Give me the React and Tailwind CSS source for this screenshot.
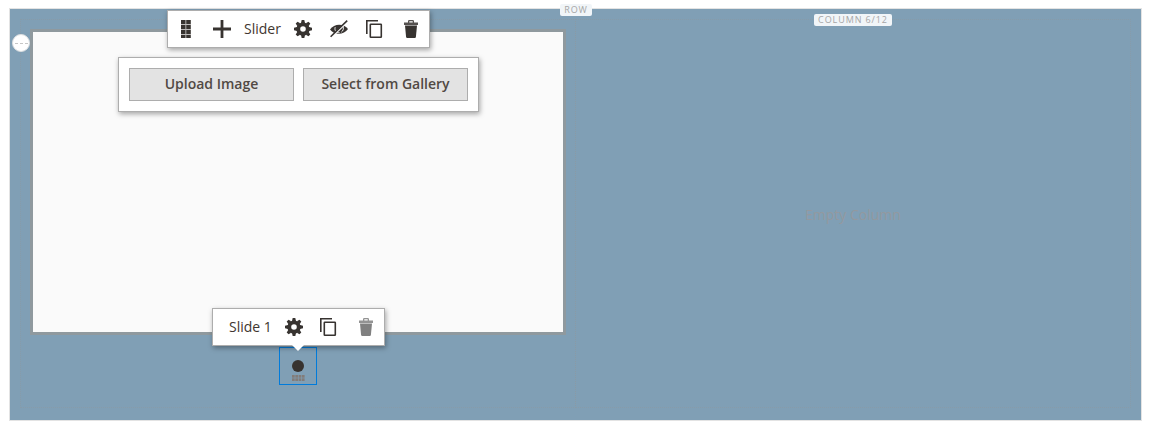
import React from "react";

const Grip = () => (
  <svg width="10" height="18" viewBox="0 0 10 18">
    <rect width="10" height="18" fill="#bdbbba" />
    {[0, 5, 10, 15].map((y) => (
      <g key={y} fill="#373330">
        <rect x="0" y={y} width="4.4" height={y === 15 ? 3 : 4} />
        <rect x="5.3" y={y} width="4.4" height={y === 15 ? 3 : 4} />
      </g>
    ))}
  </svg>
);

const Plus = () => (
  <svg width="18" height="18" viewBox="0 0 18 18" fill="#373330">
    <path d="M7.6 0h2.8v7.6H18v2.8h-7.6V18H7.6v-7.6H0V7.6h7.6z" />
  </svg>
);

const Gear = () => (
  <svg width="18" height="18" viewBox="-9 -9 18 18" fill="#373330">
    {[0, 45, 90, 135, 180, 225, 270, 315].map((a) => (
      <path key={a} d="M-2 -6L-1.3 -9H1.3L2 -6z" transform={`rotate(${a})`} />
    ))}
    <circle r="4.7" fill="none" stroke="#373330" strokeWidth="3.8" />
  </svg>
);

const EyeOff = () => (
  <svg width="20" height="18" viewBox="0 0 20 18">
    <path d="M1 9.5C5 3.2 15 3.2 19 9C15 15.3 5 15.3 1 9.5z" fill="#373330" />
    <path d="M6.2 7.2C5.2 10.5 7.5 13 10.5 12.6" fill="none" stroke="#fff" strokeWidth=".9" />
    <path d="M14 6.3C15 8.5 14 11 12.3 12.2" fill="none" stroke="#fff" strokeWidth=".9" />
    <path d="M2.2 17.6L18.8 1.4" stroke="#fff" strokeWidth="1.6" />
    <path d="M1.6 16.8L18.2 .6" stroke="#373330" strokeWidth="1.6" />
  </svg>
);

const Copy = () => (
  <svg width="17" height="19" viewBox="0 0 17 19" fill="none" stroke="#373330" strokeWidth="1.6">
    <path d="M.8 14V.8H12" />
    <rect x="4.3" y="4.3" width="11" height="13" rx=".5" />
  </svg>
);

const Trash = ({ color }) => (
  <svg width="14" height="18" viewBox="0 0 14 18" fill={color}>
    <path d="M0 2.6h4V1.2Q4 0 5.2 0h3.6Q10 0 10 1.2v1.4h4v2.3H0zM5.3 1.3v1.3h3.4V1.3z" fillRule="evenodd" opacity=".85" />
    <path d="M1 5.6h12l-1.1 11.4Q11.8 18 10.8 18H3.2Q2.2 18 2.1 17z" />
  </svg>
);

const panel =
  "absolute flex items-center border border-[#adadad] bg-white shadow-[1px_2px_5px_rgba(0,0,0,0.35)]";

const GalleryButton = ({ children }) => (
  <button className="h-[33px] w-[165px] border border-[#adadad] bg-[#e3e3e3] pb-px text-sm font-semibold text-[#514943]">
    {children}
  </button>
);

export default function App() {
  return (
    <main className="h-[432px] w-[1152px] bg-white pl-[9px] pt-2 font-['Open_Sans',sans-serif] text-[#41362f]">
      <section className="relative flex h-[413px] w-[1133px] border border-[#e3e3e3] bg-[#809fb5] p-[10px]">
        <div className="relative h-[389px] w-[556px] border border-dotted border-[#8c9aa2]/60 pl-[9px] pt-[9px]">
          <div className="relative h-[306px] w-[536px] border-[3px] border-[#8f999e] bg-[#fafafa]">
            <div className={`${panel} left-[134px] top-[-22px] h-[38px] w-[263px] pl-[13px]`}>
              <div className="w-8"><Grip /></div>
              <div className="w-[31px]"><Plus /></div>
              <div className="w-[50px] text-sm leading-5">Slider</div>
              <div className="w-[35px]"><Gear /></div>
              <div className="w-[37px]"><EyeOff /></div>
              <div className="w-[38px]"><Copy /></div>
              <Trash color="#373330" />
            </div>
            <div className={`${panel} left-[85px] top-[25px] h-[55px] w-[361px] gap-[9px] px-[10px]`}>
              <GalleryButton>Upload Image</GalleryButton>
              <GalleryButton>Select from Gallery</GalleryButton>
            </div>
            <div className={`${panel} left-[179px] top-[276px] z-10 h-[38px] w-[173px] pl-4`}>
              <div className="w-[56px] text-sm leading-5">Slide 1</div>
              <div className="w-[35px]"><Gear /></div>
              <div className="w-[39px]"><Copy /></div>
              <Trash color="#808080" />
              <svg className="absolute left-[79px] top-[36px]" width="12" height="7" viewBox="0 0 12 7">
                <path d="M0 0h12L6 6z" fill="#fff" />
              </svg>
            </div>
          </div>
          <div className="ml-[249px] mt-3 flex h-[38px] w-[38px] flex-col items-center border border-[#007bdb] pt-3">
            <div className="h-3 w-3 rounded-full bg-[#373330]" />
            <svg className="mt-[3px]" width="13" height="6" viewBox="0 0 13 6" fill="#827c79">
              {[0, 3.3, 6.6, 9.9].map((x) => (
                <g key={x}>
                  <rect x={x} y="0" width="2.7" height="2.7" />
                  <rect x={x} y="3.3" width="2.7" height="2.7" />
                </g>
              ))}
            </svg>
          </div>
          <div className="absolute left-[-9px] top-[14px] flex h-[18px] w-[18px] items-center justify-center gap-[2px] rounded-full border border-[#dcdfe1] bg-white">
            <i className="h-px w-[3px] bg-[#c6c6c6]" />
            <i className="h-px w-[3px] bg-[#c6c6c6]" />
            <i className="h-px w-[3px] bg-[#c6c6c6]" />
          </div>
        </div>
        <div className="relative -ml-px flex h-[389px] w-[556px] items-center justify-center border border-dotted border-[#8c9aa2]/60 text-sm text-[#93999f]">
          <span className="pt-[3px]">Empty Column</span>
          <span className="absolute left-[238px] top-[-6px] flex h-3 w-[78px] items-center justify-center rounded-[2px] bg-[#f1f5f8] text-[9px] tracking-[0.9px] text-[#a6a6a6]">
            COLUMN 6/12
          </span>
        </div>
        <span className="absolute left-[550px] top-[-5px] flex h-3 w-8 items-center justify-center rounded-[2px] bg-[#f1f5f8] text-[9px] tracking-[0.9px] text-[#a6a6a6]">
          ROW
        </span>
      </section>
    </main>
  );
}
